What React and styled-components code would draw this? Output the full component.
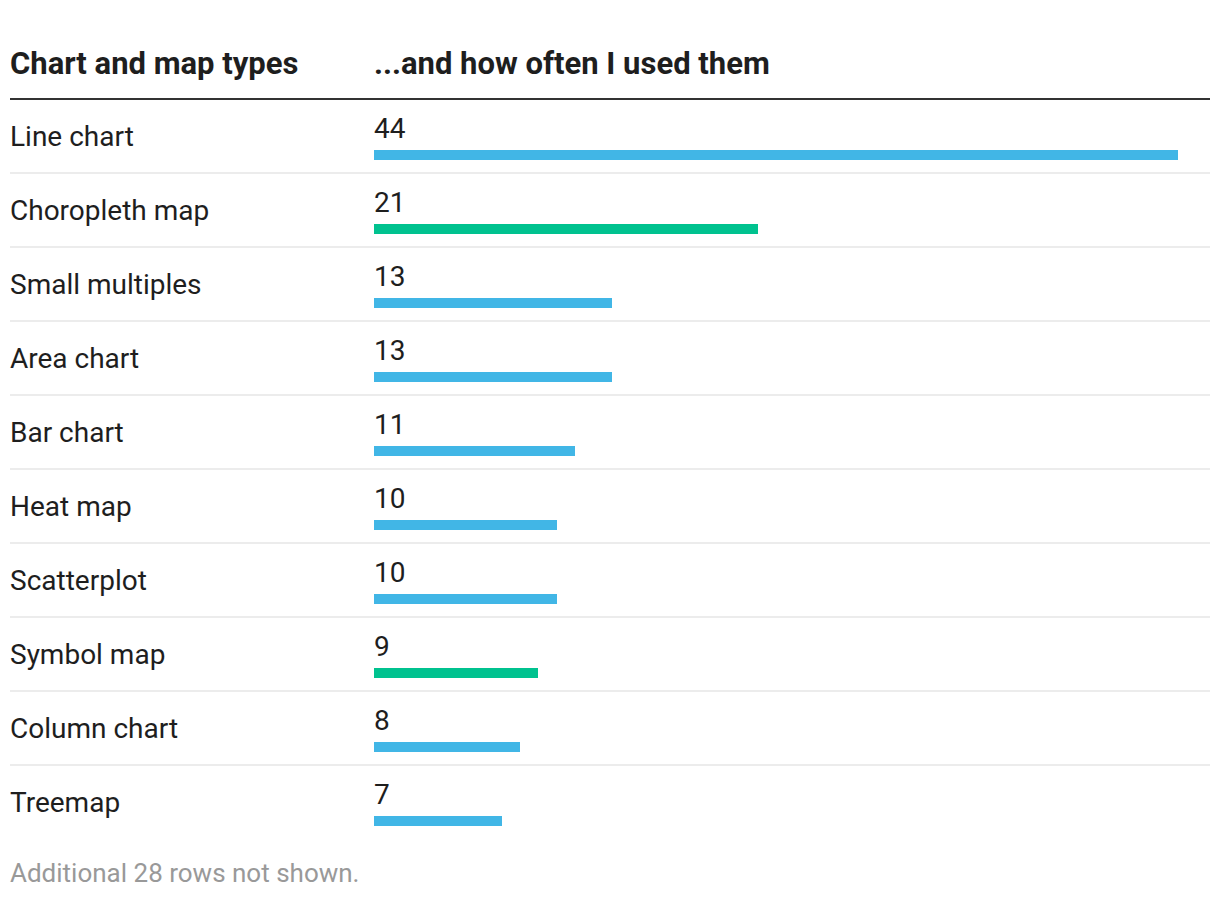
import React from 'react';
import styled, { createGlobalStyle } from 'styled-components';

const GlobalStyle = createGlobalStyle`
  html, body {
    margin: 0;
    padding: 0;
    background: #fff;
  }
  body {
    font-family: Roboto, "Liberation Sans", Arial, sans-serif;
    color: #1a1a1a;
  }
`;

const Page = styled.div`
  width: 1200px;
  padding: 0 10px;
`;

const Table = styled.div`
  display: flex;
  flex-direction: column;
`;

const HeaderRow = styled.div`
  display: grid;
  grid-template-columns: 364px 1fr;
  align-items: end;
  height: 98px;
  border-bottom: 2px solid #333;
  box-sizing: content-box;
`;

const HeaderCell = styled.div`
  font-size: 31px;
  font-weight: 700;
  color: #1e1e1e;
  line-height: 36px;
  padding-bottom: 16px;
`;

const Row = styled.div`
  display: grid;
  grid-template-columns: 364px 1fr;
  height: 72px;
  border-bottom: 2px solid #ececec;
  &:last-child {
    border-bottom: none;
  }
`;

const Label = styled.div`
  font-size: 28px;
  line-height: 32px;
  display: flex;
  align-items: center;
  padding-top: 2px;
  color: #1e1e1e;
`;

const ValueCell = styled.div`
  display: flex;
  flex-direction: column;
  padding-top: 13px;
`;

const Number = styled.div`
  font-size: 28px;
  line-height: 32px;
  color: #1e1e1e;
`;

const Bar = styled.div`
  height: 10px;
  margin-top: 5px;
  background: ${(p) => (p.$map ? '#00c28f' : '#41b6e6')};
`;

const Footer = styled.div`
  margin-top: 20px;
  font-size: 26px;
  color: #999;
`;

const rows = [
  { name: 'Line chart', value: 44 },
  { name: 'Choropleth map', value: 21, map: true },
  { name: 'Small multiples', value: 13 },
  { name: 'Area chart', value: 13 },
  { name: 'Bar chart', value: 11 },
  { name: 'Heat map', value: 10 },
  { name: 'Scatterplot', value: 10 },
  { name: 'Symbol map', value: 9, map: true },
  { name: 'Column chart', value: 8 },
  { name: 'Treemap', value: 7 },
];

const MAX = 44;
const MAX_WIDTH = 804;

export default function App() {
  return (
    <Page>
      <GlobalStyle />
      <Table>
        <HeaderRow>
          <HeaderCell>Chart and map types</HeaderCell>
          <HeaderCell>...and how often I used them</HeaderCell>
        </HeaderRow>
        {rows.map((r) => (
          <Row key={r.name}>
            <Label>{r.name}</Label>
            <ValueCell>
              <Number>{r.value}</Number>
              <Bar $map={r.map} style={{ width: (r.value / MAX) * MAX_WIDTH }} />
            </ValueCell>
          </Row>
        ))}
      </Table>
      <Footer>Additional 28 rows not shown.</Footer>
    </Page>
  );
}
